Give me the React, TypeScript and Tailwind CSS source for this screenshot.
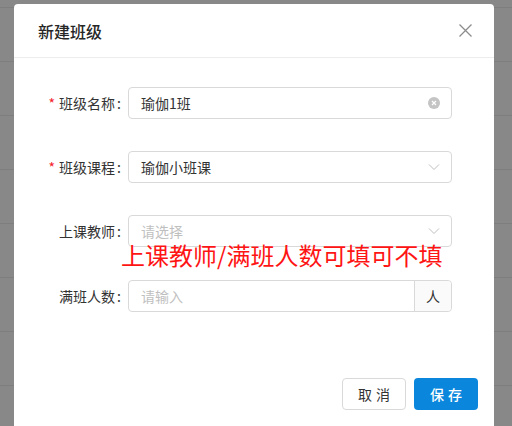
import React from "react";

const font = { fontFamily: '"Noto Sans CJK SC", "Noto Sans", sans-serif' };

function Label({ text, required }: { text: string; required?: boolean }) {
  return (
    <div className="w-[90px] shrink-0 flex items-center justify-end pr-[7px] text-[14px] text-[#333]">
      {required && <span className="text-[#f5222d] mr-[4px] text-[14px] leading-none">*</span>}
      <span>{text}</span>
      <span className="ml-[2px]">:</span>
    </div>
  );
}

function Chevron() {
  return (
    <svg width="12" height="12" viewBox="0 0 12 12" className="text-[#bfbfbf]">
      <path d="M1 3.5 L6 8.5 L11 3.5" fill="none" stroke="currentColor" strokeWidth="1" />
    </svg>
  );
}

export default function App() {
  const rows = Array.from({ length: 8 });
  return (
    <div className="relative w-[512px] h-[426px] overflow-hidden bg-[#888888]" style={font}>
      <div className="pt-[7px]">
        {rows.map((_, i) => (
          <div key={i} className="h-[54px] border-t border-[#7e7e7e]" />
        ))}
      </div>

      <div className="absolute left-[14px] top-[4px] w-[480px] h-[430px] bg-white rounded-[4px] flex flex-col">
        <div className="h-[54px] shrink-0 flex items-center justify-between pl-[24px] pr-[22px] border-b border-[#ececec]">
          <span className="text-[16px] font-medium text-[#262626]">新建班级</span>
          <svg width="13" height="13" viewBox="0 0 13 13" className="text-[#8c8c8c]">
            <path d="M0.5 0.5 L12.5 12.5 M12.5 0.5 L0.5 12.5" stroke="currentColor" strokeWidth="1.3" />
          </svg>
        </div>

        <div className="pt-[29px] pl-[24px] pr-[42px] flex flex-col">
          <div className="flex items-center h-[32px] mb-[32px]">
            <Label text="班级名称" required />
            <div className="flex-1 h-[32px] border border-[#d9d9d9] rounded-[4px] flex items-center justify-between pl-[12px] pr-[11px] text-[14px] text-[#333]">
              <span>瑜伽1班</span>
              <span className="w-[12px] h-[12px] rounded-full bg-[#c4c4c4] flex items-center justify-center">
                <svg width="6" height="6" viewBox="0 0 6 6">
                  <path d="M1 1 L5 5 M5 1 L1 5" stroke="white" strokeWidth="1.2" />
                </svg>
              </span>
            </div>
          </div>

          <div className="flex items-center h-[32px] mb-[32px]">
            <Label text="班级课程" required />
            <div className="flex-1 h-[32px] border border-[#d9d9d9] rounded-[4px] flex items-center justify-between pl-[12px] pr-[11px] text-[14px] text-[#333]">
              <span>瑜伽小班课</span>
              <Chevron />
            </div>
          </div>

          <div className="flex items-center h-[32px] mb-[33px]">
            <Label text="上课教师" />
            <div className="flex-1 h-[32px] border border-[#d9d9d9] rounded-[4px] flex items-center justify-between pl-[12px] pr-[11px] text-[14px] text-[#bfbfbf]">
              <span>请选择</span>
              <Chevron />
            </div>
          </div>

          <div className="flex items-center h-[32px]">
            <Label text="满班人数" />
            <div className="flex-1 h-[32px] border border-[#d9d9d9] rounded-[4px] flex items-stretch text-[14px]">
              <div className="flex-1 flex items-center pl-[12px] text-[#bfbfbf]">请输入</div>
              <div className="w-[37px] bg-[#fafafa] border-l border-[#d9d9d9] rounded-r-[4px] flex items-center justify-center text-[#333]">人</div>
            </div>
          </div>
        </div>

        <div className="mt-auto mb-[24px] pr-[16px] flex justify-end gap-[8px]">
          <button className="w-[64px] h-[32px] border border-[#d9d9d9] rounded-[4px] bg-white text-[14px] text-[#333] tracking-[4px] pl-[4px]">取消</button>
          <button className="w-[64px] h-[32px] rounded-[4px] bg-[#0a87dc] text-[14px] text-white font-medium tracking-[4px] pl-[4px]">保存</button>
        </div>

        <div className="absolute left-[107px] top-[234px] text-[24px] leading-[34px] text-[#ff1414] whitespace-nowrap">
          上课教师/满班人数可填可不填
        </div>
      </div>
    </div>
  );
}
